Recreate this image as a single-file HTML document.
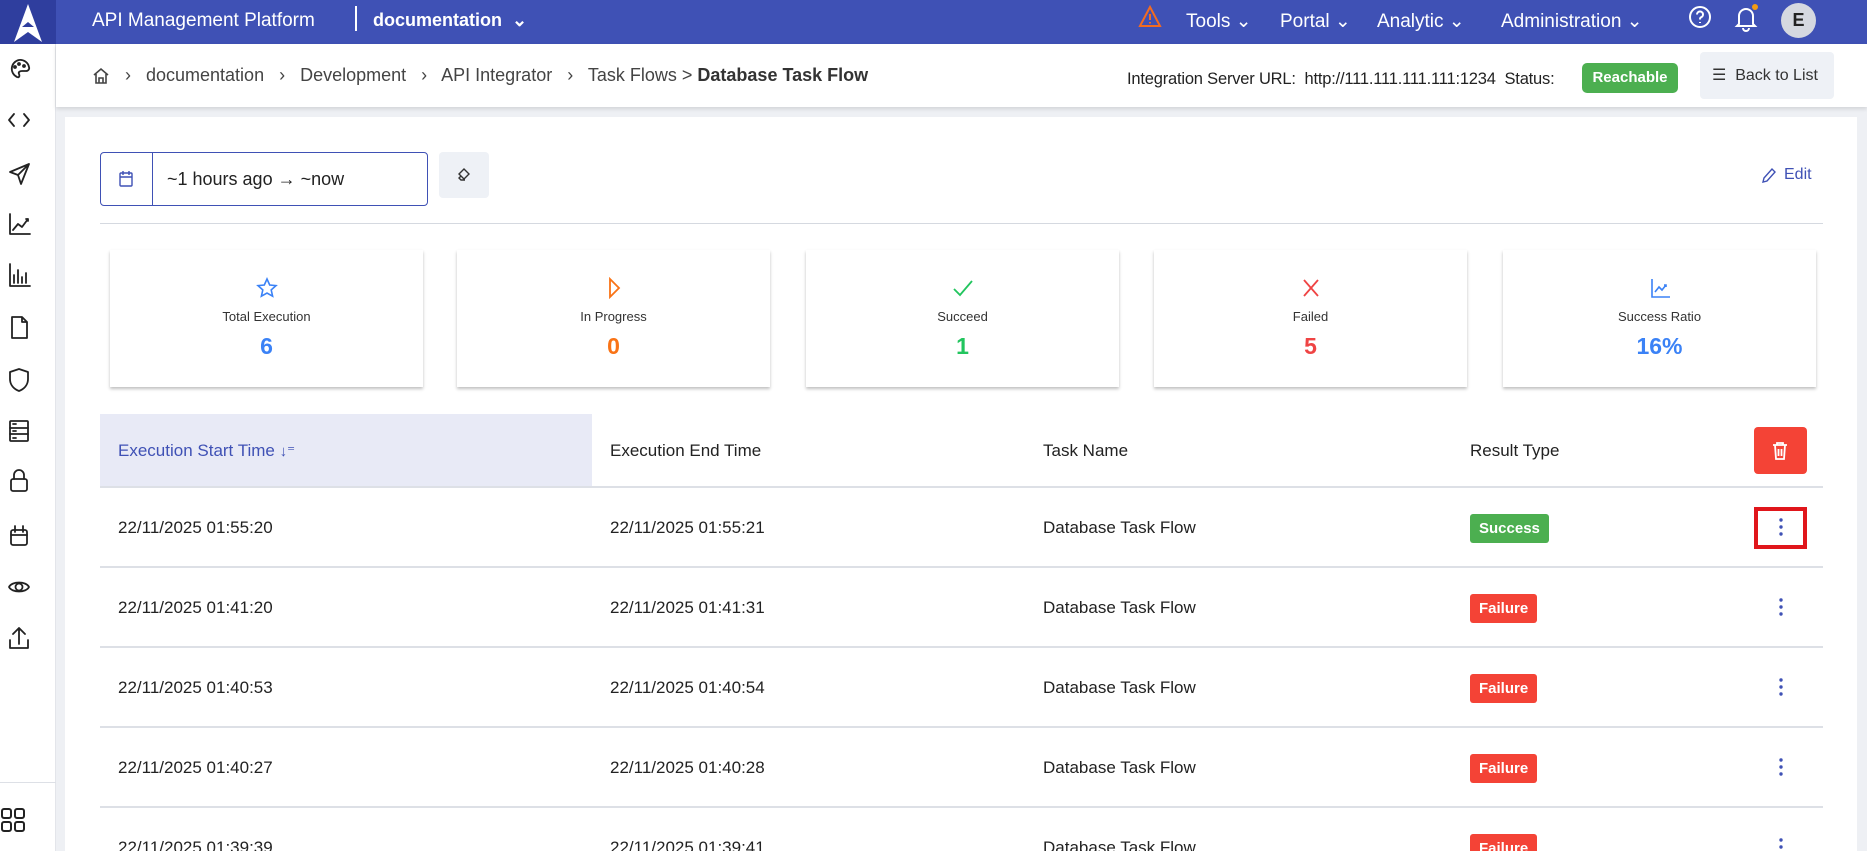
<!DOCTYPE html>
<html style="width:1867px;height:851px;overflow:hidden"><head><meta charset="utf-8">
<style>
*{box-sizing:border-box;margin:0;padding:0}
body{width:1867px;height:851px;overflow:hidden;font-family:"Liberation Sans",sans-serif;background:#eef0f4;position:relative;color:#222}
.abs{position:absolute}
.top{left:0;top:0;width:1867px;height:44px;background:#3f51b5;color:#fff}
.logo{left:0;top:0;width:56px;height:44px;background:#2f3e9e}
.side{left:0;top:44px;width:56px;height:807px;background:#fff;border-right:1px solid #e3e5ea}
.nav{top:10px;font-size:19px;color:#fff;white-space:nowrap}
.crumbbar{left:56px;top:44px;width:1811px;height:63px;background:#fff;box-shadow:0 2px 4px rgba(0,0,0,.12)}
.main{left:65px;top:117px;width:1792px;height:734px;background:#fff}
.card{top:250px;width:313px;height:137px;background:#fff;box-shadow:0 2px 3px rgba(0,0,0,.25);text-align:center}
.card .lbl{position:absolute;top:59px;width:100%;font-size:13px;color:#333}
.card .val{position:absolute;top:83px;width:100%;font-size:23px;font-weight:bold}
.card svg{position:absolute;top:27px;left:146px}
.th{top:414px;height:73px;font-size:17px;line-height:73px;color:#222}
.row{left:100px;width:1723px;height:80px;border-bottom:2px solid #dde0e6;font-size:17px}
.row span{position:absolute;top:30px}
.badge{position:absolute;top:26px;left:1370px;height:29px;line-height:29px;padding:0 9px;border-radius:3px;color:#fff;font-weight:bold;font-size:15px}
.kb{position:absolute;left:1677px;top:28px}
</style></head><body>
<div class="abs top"></div>
<div class="abs logo"><svg width="56" height="44" viewBox="0 0 56 44"><path d="M28 4 L14 42 L28 32 L42 42 Z" fill="#fff"/><path d="M22 27 L34 27 L28 22Z" fill="#2f3e9e"/></svg></div>
<div class="abs nav" style="left:92px">API Management Platform</div>
<div class="abs" style="left:355px;top:6px;width:2px;height:25px;background:#fff"></div>
<div class="abs nav" style="left:373px;font-weight:bold;font-size:18px">documentation &nbsp;⌄</div>
<svg class="abs" style="left:1138px;top:5px" width="24" height="24" viewBox="0 0 24 24"><path d="M12 2 L22 21 L2 21Z" fill="none" stroke="#f26b21" stroke-width="2"/><path d="M12 9v6M12 17v1.5" stroke="#f26b21" stroke-width="2"/></svg>
<div class="abs nav" style="left:1186px">Tools ⌄</div>
<div class="abs nav" style="left:1280px">Portal ⌄</div>
<div class="abs nav" style="left:1377px">Analytic ⌄</div>
<div class="abs nav" style="left:1501px">Administration ⌄</div>
<svg class="abs" style="left:1688px;top:5px" width="24" height="24" viewBox="0 0 24 24"><circle cx="12" cy="12" r="10" fill="none" stroke="#fff" stroke-width="2"/><path d="M9 9.5a3 3 0 1 1 4 2.8c-1 .4-1 1-1 2.2M12 17v1" stroke="#fff" stroke-width="2" fill="none"/></svg>
<svg class="abs" style="left:1733px;top:4px" width="26" height="28" viewBox="0 0 26 28"><path d="M6 20V12a7 7 0 0 1 14 0v8l2 2H4Z M10 24a3 3 0 0 0 6 0" fill="none" stroke="#fff" stroke-width="2"/><circle cx="22" cy="3" r="3" fill="#f39c12"/></svg>
<div class="abs" style="left:1781px;top:3px;width:35px;height:35px;border-radius:50%;background:#d5d8e0;color:#222;font-weight:bold;font-size:18px;text-align:center;line-height:35px">E</div>

<div class="abs side"></div>
<svg class="abs" style="left:0;top:44px" width="56" height="760" viewBox="0 44 56 760" fill="none" stroke="#222" stroke-width="1.8" stroke-linecap="round" stroke-linejoin="round">
<path d="M19 60a9 9 0 0 0-2 17c2 1 3-1 2-3s1-3 3-3h4a3 3 0 0 0 3-4 9 9 0 0 0-10-7z"/><circle cx="15" cy="67" r="1"/><circle cx="19" cy="64" r="1"/><circle cx="24" cy="66" r="1"/>
<path d="M14 114l-5 6 5 6M24 114l5 6-5 6"/>
<path d="M29 164L10 172l8 3 3 9z M18 175l11-11"/>
<path d="M10 214v20h20 M13 230l5-6 4 3 6-8 M26 219h2v2"/>
<path d="M10 264v22h20 M14 283v-8 M18 283v-13 M22 283v-6 M26 283v-10"/>
<path d="M12 317h10l5 5v16H12z M22 317v5h5"/>
<path d="M19 369l9 3v7c0 6-4 10-9 12-5-2-9-6-9-12v-7z"/>
<rect x="10" y="421" width="18" height="20" rx="1"/><path d="M10 428h18M10 434h18M13 424h3M13 431h3M13 438h3"/>
<rect x="11" y="479" width="16" height="12" rx="2"/><path d="M14 479v-4a5 5 0 0 1 10 0v4"/>
<rect x="11" y="530" width="16" height="15" rx="2"/><path d="M11 535h16M15 526v6M23 526v6"/>
<path d="M9 587c3-6 17-6 20 0-3 6-17 6-20 0z"/><circle cx="19" cy="587" r="3.5"/>
<path d="M10 640v8h18v-8M19 644v-16M13 634l6-6 6 6"/>
</svg>
<div class="abs" style="left:0;top:782px;width:56px;height:1px;background:#dde0e6"></div>
<svg class="abs" style="left:0;top:806px" width="28" height="28" viewBox="0 0 28 28" fill="none" stroke="#222" stroke-width="2"><rect x="2" y="3" width="9" height="9" rx="2"/><rect x="15" y="3" width="9" height="9" rx="2"/><rect x="2" y="16" width="9" height="9" rx="2"/><rect x="15" y="16" width="9" height="9" rx="2"/></svg>

<div class="abs crumbbar"></div>
<svg class="abs" style="left:91px;top:66px" width="20" height="20" viewBox="0 0 20 20" fill="none" stroke="#444" stroke-width="1.6"><path d="M3 9l7-6 7 6M5 8v9h10V8M8 17v-5h4v5"/></svg>
<div class="abs" style="left:120px;top:65px;font-size:18px;color:#444;white-space:nowrap">&nbsp;›&nbsp;&nbsp; documentation &nbsp;&nbsp;›&nbsp;&nbsp; Development &nbsp;&nbsp;›&nbsp;&nbsp; API Integrator &nbsp;&nbsp;›&nbsp;&nbsp; Task Flows &gt; <b style="color:#333">Database Task Flow</b></div>
<div class="abs" style="left:1127px;top:70px;font-size:16.5px;color:#222;white-space:nowrap;letter-spacing:-0.2px">Integration Server URL:&nbsp; http://111.111.111.111:1234&nbsp; Status:</div>
<div class="abs" style="left:1582px;top:63px;width:96px;height:30px;border-radius:5px;background:#4caf50;color:#fff;font-weight:bold;font-size:15px;text-align:center;line-height:30px">Reachable</div>
<div class="abs" style="left:1700px;top:52px;width:134px;height:47px;border-radius:4px;background:#eef1f6;font-size:16px;line-height:47px;color:#333;padding-left:12px">☰&nbsp; Back to List</div>

<div class="abs main"></div>
<div class="abs" style="left:100px;top:152px;width:328px;height:54px;border:1px solid #3f51b5;border-radius:4px"></div>
<div class="abs" style="left:152px;top:152px;width:1px;height:54px;background:#3f51b5"></div>
<svg class="abs" style="left:118px;top:170px" width="16" height="18" viewBox="0 0 16 18" fill="none" stroke="#3f51b5" stroke-width="1.4"><rect x="2" y="3" width="12" height="13" rx="1"/><path d="M2 7h12M5 1v4M11 1v4"/></svg>
<div class="abs" style="left:167px;top:169px;font-size:18px;color:#222">~1 hours ago → ~now</div>
<div class="abs" style="left:439px;top:152px;width:50px;height:46px;border-radius:4px;background:#eef1f6"></div>
<svg class="abs" style="left:455px;top:166px" width="18" height="18" viewBox="0 0 18 18" fill="none" stroke="#333" stroke-width="1.4"><path d="M9 3l5 5-5 5-5-5z M6 10l-2 2 2 2h4"/></svg>
<svg class="abs" style="left:1760px;top:166px" width="16" height="18" viewBox="0 0 16 18" fill="none" stroke="#3f51b5" stroke-width="1.4"><path d="M3 16l1-4 8-9 3 3-8 9z"/></svg>
<div class="abs" style="left:1784px;top:166px;font-size:16px;color:#3f51b5">Edit</div>
<div class="abs" style="left:100px;top:223px;width:1723px;height:1px;background:#d5d9e0"></div>

<div class="abs card" style="left:110px"><svg width="22" height="22" viewBox="0 0 22 22" fill="none" stroke="#3b82f6" stroke-width="1.6"><path d="M11 2l2.7 6 6.3.6-4.8 4.3 1.4 6.3L11 16l-5.6 3.2 1.4-6.3L2 8.6 8.3 8z"/></svg><div class="lbl">Total Execution</div><div class="val" style="color:#3b82f6">6</div></div>
<div class="abs card" style="left:457px"><svg width="22" height="22" viewBox="0 0 22 22" fill="none" stroke="#f97316" stroke-width="1.8"><path d="M7 2l9 9-9 9z"/></svg><div class="lbl">In Progress</div><div class="val" style="color:#f97316">0</div></div>
<div class="abs card" style="left:806px"><svg width="22" height="22" viewBox="0 0 22 22" fill="none" stroke="#22c55e" stroke-width="1.8"><path d="M2 12l6 6L20 4"/></svg><div class="lbl">Succeed</div><div class="val" style="color:#22c55e">1</div></div>
<div class="abs card" style="left:1154px"><svg width="22" height="22" viewBox="0 0 22 22" fill="none" stroke="#ef4444" stroke-width="1.8"><path d="M4 3l14 16M18 3L4 19"/></svg><div class="lbl">Failed</div><div class="val" style="color:#ef4444">5</div></div>
<div class="abs card" style="left:1503px"><svg width="22" height="22" viewBox="0 0 22 22" fill="none" stroke="#3b82f6" stroke-width="1.6"><path d="M3 2v18h18M6 15l4-5 3 3 4-5M15 8h2v2"/></svg><div class="lbl">Success Ratio</div><div class="val" style="color:#3b82f6">16%</div></div>

<div class="abs" style="left:100px;top:414px;width:492px;height:73px;background:#e8eaf6"></div>
<div class="abs" style="left:100px;top:486px;width:1723px;height:2px;background:#dde0e6"></div>
<div class="abs th" style="left:118px;color:#3f51b5">Execution Start Time <span style="font-size:15px">↓⁼</span></div>
<div class="abs th" style="left:610px">Execution End Time</div>
<div class="abs th" style="left:1043px">Task Name</div>
<div class="abs th" style="left:1470px">Result Type</div>
<div class="abs" style="left:1754px;top:427px;width:53px;height:47px;border-radius:4px;background:#f44336"></div>
<svg class="abs" style="left:1771px;top:441px" width="18" height="20" viewBox="0 0 18 20" fill="none" stroke="#fff" stroke-width="1.8"><path d="M2 4h14M6 4V2h6v2M4 4l1 14h8l1-14M7.5 8v7M10.5 8v7"/></svg>

<div class="abs row" style="top:488px"><span style="left:18px">22/11/2025 01:55:20</span><span style="left:510px">22/11/2025 01:55:21</span><span style="left:943px">Database Task Flow</span><div class="badge" style="background:#4caf50">Success</div><div style="position:absolute;left:1654px;top:19px;width:53px;height:42px;border:4px solid #e0161b"></div><svg class="kb" width="8" height="22"><circle cx="4" cy="4" r="1.7" fill="#3f51b5"/><circle cx="4" cy="11" r="1.7" fill="#3f51b5"/><circle cx="4" cy="18" r="1.7" fill="#3f51b5"/></svg></div>
<div class="abs row" style="top:568px"><span style="left:18px">22/11/2025 01:41:20</span><span style="left:510px">22/11/2025 01:41:31</span><span style="left:943px">Database Task Flow</span><div class="badge" style="background:#f44336">Failure</div><svg class="kb" width="8" height="22"><circle cx="4" cy="4" r="1.7" fill="#3f51b5"/><circle cx="4" cy="11" r="1.7" fill="#3f51b5"/><circle cx="4" cy="18" r="1.7" fill="#3f51b5"/></svg></div>
<div class="abs row" style="top:648px"><span style="left:18px">22/11/2025 01:40:53</span><span style="left:510px">22/11/2025 01:40:54</span><span style="left:943px">Database Task Flow</span><div class="badge" style="background:#f44336">Failure</div><svg class="kb" width="8" height="22"><circle cx="4" cy="4" r="1.7" fill="#3f51b5"/><circle cx="4" cy="11" r="1.7" fill="#3f51b5"/><circle cx="4" cy="18" r="1.7" fill="#3f51b5"/></svg></div>
<div class="abs row" style="top:728px"><span style="left:18px">22/11/2025 01:40:27</span><span style="left:510px">22/11/2025 01:40:28</span><span style="left:943px">Database Task Flow</span><div class="badge" style="background:#f44336">Failure</div><svg class="kb" width="8" height="22"><circle cx="4" cy="4" r="1.7" fill="#3f51b5"/><circle cx="4" cy="11" r="1.7" fill="#3f51b5"/><circle cx="4" cy="18" r="1.7" fill="#3f51b5"/></svg></div>
<div class="abs row" style="top:808px;height:43px;border:none;overflow:hidden"><span style="left:18px">22/11/2025 01:39:39</span><span style="left:510px">22/11/2025 01:39:41</span><span style="left:943px">Database Task Flow</span><div class="badge" style="background:#f44336">Failure</div><svg class="kb" width="8" height="22"><circle cx="4" cy="4" r="1.7" fill="#3f51b5"/><circle cx="4" cy="11" r="1.7" fill="#3f51b5"/><circle cx="4" cy="18" r="1.7" fill="#3f51b5"/></svg></div>
</body></html>
